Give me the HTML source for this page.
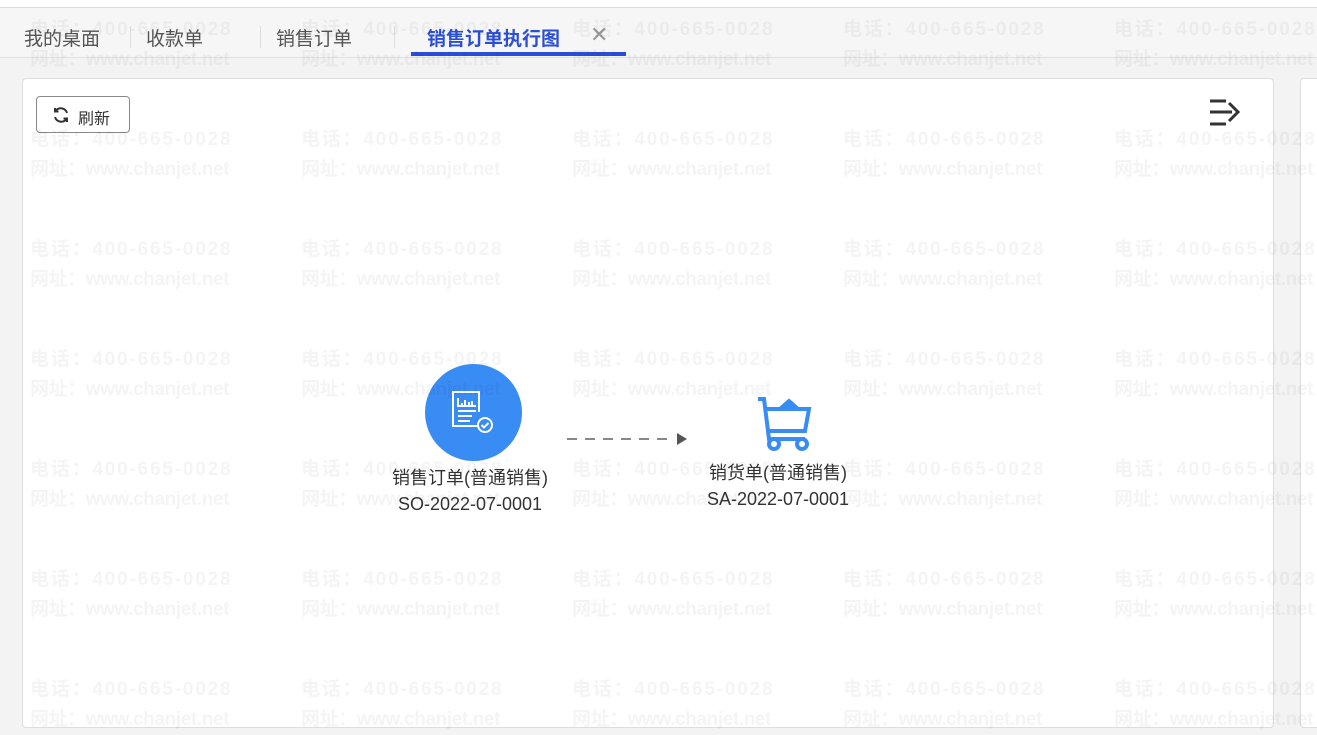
<!DOCTYPE html>
<html><head><meta charset="utf-8"><style>
*{margin:0;padding:0;box-sizing:border-box}
body{width:1317px;height:714px;overflow:hidden;background:#f3f3f3;font-family:"Liberation Sans","Noto Sans CJK SC",sans-serif;position:relative}
.top{position:absolute;left:0;top:0;width:1317px;height:8px;background:#fff;border-bottom:1px solid #dcdcdc}
.tabs{position:absolute;left:0;top:8px;width:1317px;height:50px;background:#f6f6f6;border-bottom:1px solid #e0e0e0}
.tab{position:absolute;top:16px;font-size:19px;color:#555;white-space:nowrap}
.sep{position:absolute;top:18px;width:1px;height:22px;background:#ddd}
.panel{position:absolute;left:22px;top:78px;width:1252px;height:650px;background:#fff;border:1px solid #ddd;border-radius:4px}
.panel2{position:absolute;left:1300px;top:78px;width:40px;height:650px;background:#fff;border:1px solid #ddd;border-radius:4px}
.btn{position:absolute;left:36px;top:96px;width:94px;height:37px;border:1px solid #888;border-radius:4px;background:#fff;font-size:16px;color:#333}
.wm{position:absolute;font-size:19px;font-weight:bold;color:rgba(0,0,0,0.045);white-space:nowrap;line-height:30px;pointer-events:none}
.wm span{display:block}
.wm .a{letter-spacing:1.8px}
.wm .b{letter-spacing:-0.4px}
.lbl{position:absolute;font-size:18px;color:#333;text-align:center;white-space:nowrap;line-height:26px}
</style></head><body>
<div class="top"></div>
<div class="tabs">
<div class="tab" style="left:24px">我的桌面</div>
<div class="sep" style="left:130px"></div>
<div class="tab" style="left:146px">收款单</div>
<div class="sep" style="left:260px"></div>
<div class="tab" style="left:276px">销售订单</div>
<div class="sep" style="left:394px"></div>
<div class="tab" style="left:427px;color:#2a4ed8;font-weight:bold">销售订单执行图</div>
<div class="tab" style="left:590px;top:14px;color:#999;font-size:22px">✕</div>
<div style="position:absolute;left:411px;top:44px;width:215px;height:4px;background:#2a4ed8"></div>
</div>
<div class="panel"></div>
<div class="panel2"></div>
<div class="btn">
<svg style="position:absolute;left:15px;top:9px" width="18" height="18" viewBox="0 0 18 18" fill="none" stroke="#333" stroke-width="2"><path d="M15 7A6.5 6.5 0 0 0 3.5 5M3 11a6.5 6.5 0 0 0 11.5 2"/><path d="M3 2v3.5h3.5M15 16v-3.5h-3.5"/></svg>
<span style="position:absolute;left:41px;top:8px">刷新</span></div>
<svg style="position:absolute;left:1209px;top:98px" width="32" height="30" viewBox="0 0 32 30" fill="none" stroke="#333" stroke-width="3"><path d="M1 3h16M1 14h22M1 26h16"/><path d="M20 5l9 9-9 9"/></svg>
<div style="position:absolute;left:425px;top:364px;width:97px;height:97px;border-radius:50%;background:#3a8cf5"></div>
<svg style="position:absolute;left:449px;top:389px" width="48" height="48" viewBox="0 0 48 48" fill="none" stroke="#fff" stroke-width="2"><path d="M30 37H4V3h26v20"/><path d="M9 9v8h18M13 14v3M16 11v6M20 13v4M23 12v4M9 22h18M9 27h14M9 32h12"/><circle cx="36" cy="36" r="7"/><path d="M32.5 36l2.5 2.5 4.5-4.5"/></svg>
<svg style="position:absolute;left:752px;top:397px" width="62" height="56" viewBox="0 0 62 56" fill="none" stroke="#3a8cf5" stroke-width="4"><path d="M6 2h6l5 40h36"/><path d="M15 12h42l-4 22H17"/><path d="M28 12l9-8 9 8z" fill="#3a8cf5"/><circle cx="22" cy="47" r="5"/><circle cx="50" cy="47" r="5"/></svg>
<svg style="position:absolute;left:565px;top:432px" width="126" height="14"><path d="M2 7h108" stroke="#888" stroke-width="2" stroke-dasharray="10 8"/><path d="M112 1l10 6-10 6z" fill="#555"/></svg>
<div class="lbl" style="left:380px;top:465px;width:180px">销售订单(普通销售)<br>SO-2022-07-0001</div>
<div class="lbl" style="left:688px;top:460px;width:180px">销货单(普通销售)<br>SA-2022-07-0001</div>
<div id="w"></div>
<script>
var h='';var xs=[30,301,572,843,1114];var ys=[15,125,235,345,455,565,675];
for(var i=0;i<ys.length;i++)for(var j=0;j<xs.length;j++)h+='<div class="wm" style="left:'+xs[j]+'px;top:'+ys[i]+'px"><span class="a">电话：400-665-0028</span><span class="b">网址：www.chanjet.net</span></div>';
document.getElementById('w').innerHTML=h;
</script>
</body></html>
